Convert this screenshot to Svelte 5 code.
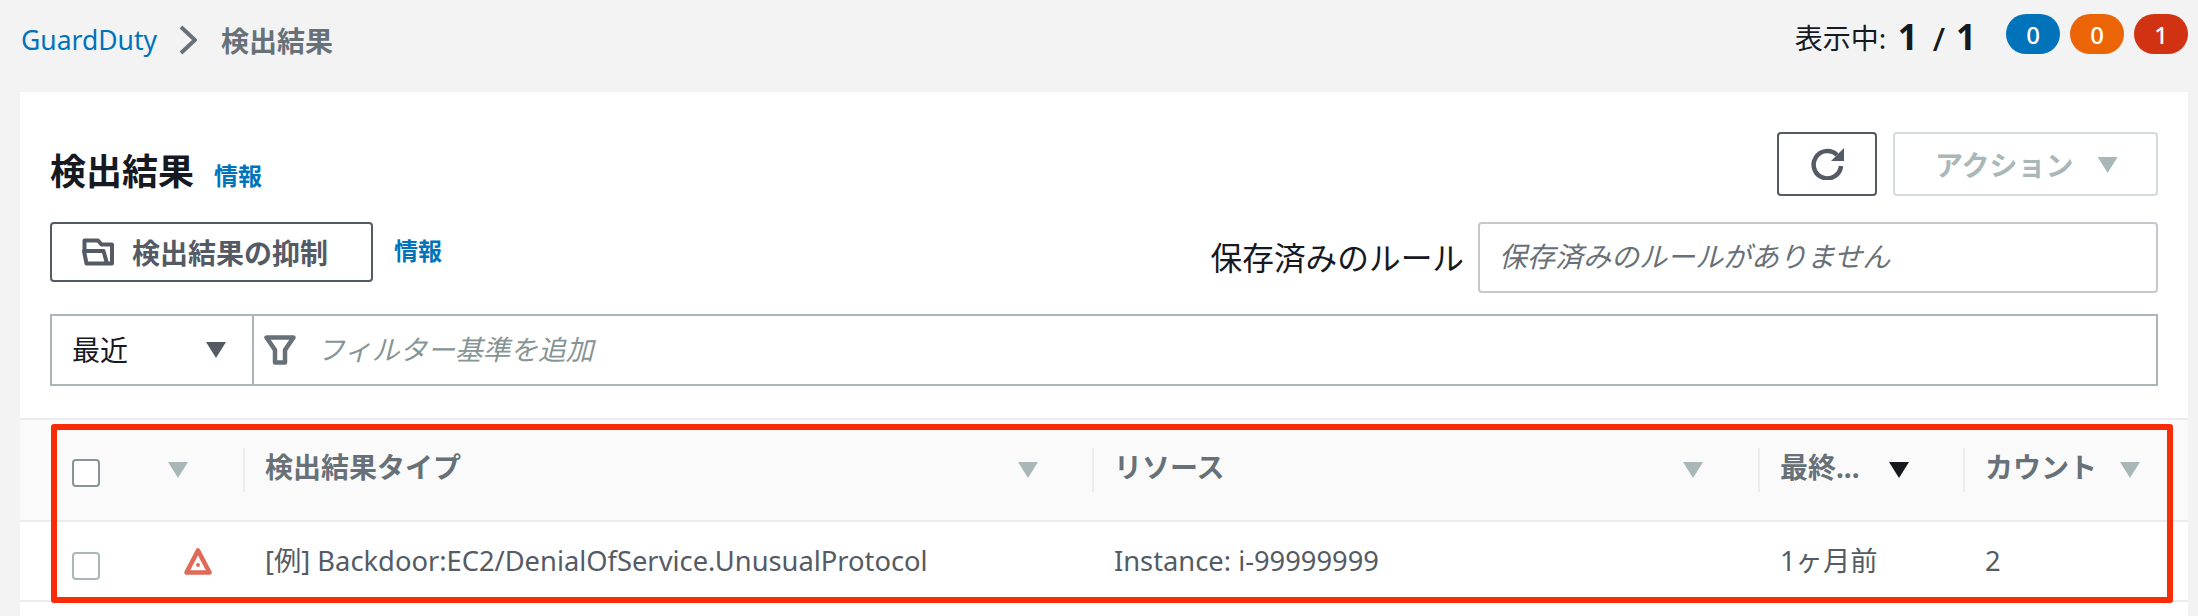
<script>
  const columns = [
    { label: '検出結果タイプ', arrow: 'dim' },
    { label: 'リソース', arrow: 'dim' },
    { label: '最終...', arrow: 'dark' },
    { label: 'カウント', arrow: 'dim' }
  ];
  const cells = ['[例] Backdoor:EC2/DenialOfService.UnusualProtocol', 'Instance: i-99999999', '1ヶ月前', '2'];
</script>

<div class="page">
  <header class="top">
    <nav class="crumbs">
      <a class="crumb-link" href="#top">GuardDuty</a>
      <svg class="chev" viewBox="0 0 18 30" aria-hidden="true"><path d="M2 2 L16 15 L2 28" /></svg>
      <span class="crumb-now">検出結果</span>
    </nav>
    <div class="status">
      <span class="showing">表示中:</span>
      <b class="num">1</b><span class="slash">/</span><b class="num">1</b>
      <div class="badges">
        <span class="badge blue">0</span>
        <span class="badge orange">0</span>
        <span class="badge red">1</span>
      </div>
    </div>
  </header>

  <main class="card">
    <div class="row-title">
      <div class="title-wrap">
        <h1>検出結果</h1>
        <a class="info" href="#top">情報</a>
      </div>
      <div class="actions">
        <button class="btn refresh" aria-label="更新">
          <svg viewBox="0 0 33 32" class="refresh-icon" aria-hidden="true">
            <path d="M26 7 A13.7 13.7 0 1 0 30 18" />
            <path class="head" d="M20 13 H33 V0 Z" />
          </svg>
        </button>
        <button class="btn action" disabled>アクション<i class="tri dim big"></i></button>
      </div>
    </div>

    <div class="row-suppress">
      <div class="suppress">
        <button class="btn suppress-btn">
          <svg viewBox="0 0 32 28" class="folder" aria-hidden="true">
            <path d="M2.5 13 V2.5 H16 L19.5 6.5 H30 V25.5 H4.5 L2 13 H21.5 L25 25.5" />
          </svg>
          検出結果の抑制
        </button>
        <a class="info small" href="#top">情報</a>
      </div>
      <div class="saved">
        <span class="saved-label">保存済みのルール</span>
        <div class="saved-input">保存済みのルールがありません</div>
      </div>
    </div>

    <div class="filter">
      <div class="filter-select">最近<i class="tri mid big"></i></div>
      <div class="filter-input">
        <svg viewBox="0 0 32 30" class="funnel" aria-hidden="true">
          <path d="M2.5 2.5 H29.5 L21 15 V27.5 H11 V15 Z" />
        </svg>
        <span>フィルター基準を追加</span>
      </div>
    </div>

    <div class="table">
      <div class="thead grid">
        <div class="lead">
          <span class="check strong"></span>
          <i class="tri dim lead-arrow"></i>
        </div>
        {#each columns as c}
          <div class="th"><span>{c.label}</span><i class="tri {c.arrow}"></i></div>
        {/each}
      </div>
      <div class="tbody grid">
        <div class="lead">
          <span class="check lower"></span>
          <svg viewBox="0 0 28 28" class="warn" aria-hidden="true">
            <path d="M14 3.5 L25.5 25.5 H2.5 Z" />
            <circle cx="14" cy="18" r="2" />
          </svg>
        </div>
        {#each cells as c}
          <div class="td">{c}</div>
        {/each}
      </div>
    </div>
  </main>

  <div class="highlight"></div>
</div>

<style>
  :global(body) {
    margin: 0;
    background: #f3f3f3;
  }
  .page {
    position: relative;
    height: 616px;
    overflow: hidden;
    font-family: "Noto Sans", "Noto Sans CJK JP", sans-serif;
    color: #16191f;
  }
  .top {
    height: 92px;
    display: flex;
    justify-content: space-between;
    padding: 0 10px 0 21px;
    box-sizing: border-box;
  }
  .crumbs {
    display: flex;
    align-items: center;
    height: 80px;
  }
  .crumb-link {
    font-size: 26.5px;
    color: #0073bb;
    text-decoration: none;
  }
  .chev {
    width: 18px;
    height: 30px;
    margin: 0 24px 0 22px;
    fill: none;
    stroke: #687078;
    stroke-width: 4;
  }
  .crumb-now {
    font-size: 28px;
    font-weight: 700;
    color: #687078;
  }
  .status {
    display: flex;
    align-items: flex-start;
    height: 70px;
  }
  .showing {
    font-size: 28px;
    margin-top: 18px;
    line-height: 40px;
    width: 103px;
  }
  .num {
    font-size: 35px;
    line-height: 44px;
    margin-top: 15px;
    width: 20px;
  }
  .slash {
    font-size: 32px;
    font-weight: 500;
    line-height: 44px;
    margin: 17px 11px 0 15px;
  }
  .badges {
    display: flex;
    gap: 10px;
    margin: 14px 0 0 30px;
  }
  .badge {
    width: 54px;
    height: 40px;
    border-radius: 20px;
    display: flex;
    align-items: center;
    justify-content: center;
    color: #fff;
    font-size: 24px;
    font-weight: 500;
  }
  .blue { background: #0073bb; }
  .orange { background: #eb6507; }
  .red { background: #d13212; }

  .card {
    background: #fff;
    margin: 0 10px 0 20px;
    height: 524px;
    padding-top: 40px;
    box-sizing: border-box;
  }
  .row-title,
  .row-suppress,
  .filter {
    margin-left: 30px;
    margin-right: 30px;
  }
  .row-title {
    height: 64px;
    display: flex;
    justify-content: space-between;
  }
  .title-wrap {
    display: flex;
    align-items: baseline;
    padding-top: 17px;
    gap: 20px;
  }
  h1 {
    margin: 0;
    font-size: 36px;
    line-height: 46px;
    font-weight: 700;
  }
  .info {
    font-size: 24px;
    font-weight: 700;
    color: #0073bb;
    text-decoration: none;
  }
  .actions {
    display: flex;
    gap: 16px;
  }
  .btn {
    font-family: inherit;
    background: #fff;
    box-sizing: border-box;
    border: 2px solid #545b64;
    border-radius: 4px;
    padding: 0;
    display: flex;
    align-items: center;
    justify-content: center;
    color: #545b64;
    font-weight: 700;
    font-size: 28px;
  }
  .refresh {
    width: 100px;
    height: 64px;
  }
  .refresh-icon {
    width: 33px;
    height: 32px;
    fill: none;
    stroke: #545b64;
    stroke-width: 4.5;
  }
  .refresh-icon .head {
    fill: #545b64;
    stroke: none;
  }
  .action {
    width: 265px;
    height: 64px;
    border-color: #d5dbdb;
    color: #aab7b8;
    gap: 24px;
    justify-content: flex-start;
    padding-left: 40px;
  }
  .tri {
    display: block;
    flex: none;
    width: 20px;
    height: 16px;
    clip-path: polygon(0 0, 100% 0, 50% 100%);
  }
  .dim { background: #aab7b8; }
  .mid { background: #545b64; }
  .dark { background: #16191f; }

  .row-suppress {
    margin-top: 26px;
    height: 71px;
    display: flex;
    justify-content: space-between;
  }
  .suppress {
    display: flex;
    align-items: flex-start;
  }
  .suppress-btn {
    width: 323px;
    height: 60px;
    gap: 18px;
    justify-content: flex-start;
    padding-left: 30px;
  }
  .folder {
    width: 32px;
    height: 28px;
    fill: none;
    stroke: #545b64;
    stroke-width: 4;
    stroke-linejoin: round;
    stroke-linecap: round;
  }
  .small {
    margin: 12px 0 0 21px;
    line-height: 34px;
  }
  .saved {
    display: flex;
    align-items: flex-start;
  }
  .saved-label {
    font-size: 31.7px;
    line-height: 71px;
    margin-right: 14px;
  }
  .saved-input {
    width: 680px;
    height: 71px;
    box-sizing: border-box;
    border: 2px solid #c6c6cd;
    border-radius: 4px;
    padding-left: 19px;
    font-size: 28px;
    line-height: 64px;
    font-style: italic;
    color: #687078;
  }

  .filter {
    margin-top: 21px;
    height: 72px;
    box-sizing: border-box;
    border: 2px solid #aab7b8;
    display: flex;
  }
  .filter-select {
    width: 202px;
    box-sizing: border-box;
    border-right: 2px solid #aab7b8;
    display: flex;
    align-items: center;
    justify-content: space-between;
    padding: 0 26px 2px 20px;
    font-size: 28px;
  }
  .tri.big {
    margin-top: 2px;
  }
  .filter-input {
    flex: 1;
    display: flex;
    align-items: center;
    gap: 21px;
    padding-left: 10px;
    font-size: 27.7px;
    font-style: italic;
    color: #879596;
  }
  .filter-input span {
    margin-top: -4px;
  }
  .funnel {
    width: 32px;
    height: 30px;
    fill: none;
    stroke: #687078;
    stroke-width: 4.5;
    stroke-linejoin: round;
  }

  .table {
    margin-top: 32px;
  }
  .grid {
    display: grid;
    grid-template-columns: 223px 849px 666px 205px 225px;
    box-sizing: border-box;
  }
  .thead {
    height: 104px;
    background: #fafafa;
    border-top: 2px solid #eaeded;
    border-bottom: 2px solid #eaeded;
    align-items: center;
  }
  .tbody {
    height: 80px;
    border-bottom: 2px solid #eaeded;
    align-items: center;
  }
  .lead {
    display: flex;
    align-items: center;
    padding-left: 52px;
  }
  .thead .lead {
    height: 44px;
  }
  .check {
    display: block;
    box-sizing: border-box;
    width: 28px;
    height: 28px;
    background: #fff;
    border: 2px solid #aab7b8;
    border-radius: 4px;
  }
  .check.strong {
    border-color: #879596;
    margin-top: 6px;
  }
  .check.lower {
    margin-top: 9px;
  }
  .lead-arrow {
    margin-left: 68px;
  }
  .warn {
    width: 28px;
    height: 28px;
    margin-left: 84px;
    fill: none;
    stroke: #e06a58;
    stroke-width: 4.6;
    stroke-linejoin: round;
  }
  .warn circle {
    fill: #e06a58;
    stroke: none;
  }
  .th {
    height: 44px;
    border-left: 2px solid #eaeded;
    padding: 0 54px 0 20px;
    display: flex;
    align-items: center;
    justify-content: space-between;
    font-size: 28px;
    line-height: 36px;
    font-weight: 700;
    color: #687078;
  }
  .th span {
    margin-top: -6px;
  }
  .th:nth-child(3) {
    padding-right: 55px;
  }
  .th:nth-child(5) {
    padding-right: 48px;
  }
  .td {
    padding-left: 22px;
    font-size: 27.3px;
    line-height: 34px;
    color: #545b64;
    white-space: nowrap;
  }
  .highlight {
    position: absolute;
    left: 51px;
    top: 424px;
    width: 2122px;
    height: 179px;
    box-sizing: border-box;
    border: 6px solid #f92c08;
    border-radius: 3px;
  }
</style>
